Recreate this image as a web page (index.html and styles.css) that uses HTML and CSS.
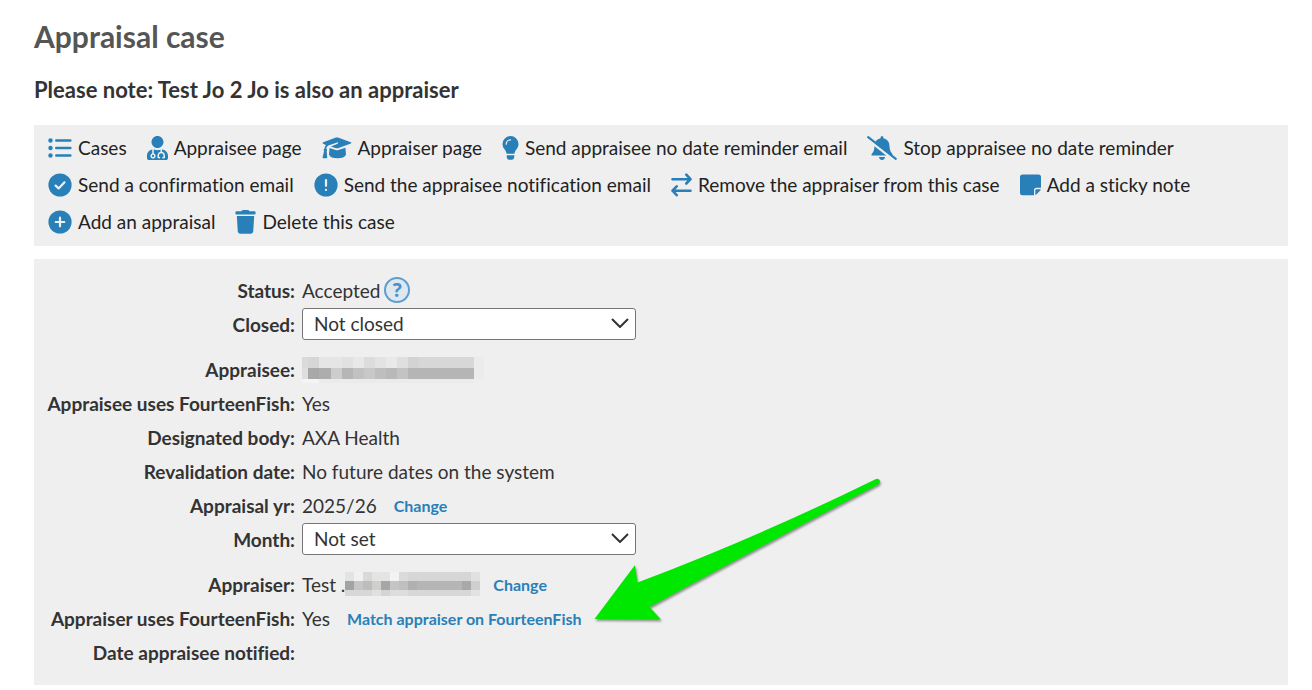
FILE: index.html
```html
<!DOCTYPE html>
<html lang="en">

<head>
    <meta charset="utf-8" />
    <title>Appraisal case</title>
    <meta name="viewport" content="width=device-width, initial-scale=1.0">
    <link rel="stylesheet" href="styles.css">
</head>

<body>
    <main class="main">
        <h1 class="title">Appraisal case</h1>
        <h2 class="note">Please note: Test Jo 2 Jo is also an appraiser</h2>

        <!-- Case actions -->
        <nav class="menu-bar">
            <a class="menu-item" href="#">
                <svg class="icon" width="24" height="24" viewBox="0 0 24 24">
                    <circle cx="2.5" cy="4.5" r="2.2" /><circle cx="2.5" cy="12" r="2.2" /><circle cx="2.5" cy="19.5" r="2.2" />
                    <path class="line" d="M8.3 4.5H22.3M8.3 12H22.3M8.3 19.5H22.3" stroke-width="2.6" />
                </svg>
                Cases
            </a>
            <a class="menu-item" href="#">
                <svg class="icon" width="21" height="24" viewBox="0 0 448 512">
                    <path d="M224 256c70.7 0 128-57.3 128-128S294.7 0 224 0 96 57.3 96 128s57.3 128 128 128zM104 424c0 13.3 10.7 24 24 24s24-10.7 24-24-10.7-24-24-24-24 10.7-24 24zm216-135.4v49c36.5 7.4 64 39.8 64 78.4v41.7c0 7.6-5.4 14.2-12.9 15.7l-32.2 6.4c-4.3.9-8.5-1.9-9.4-6.3l-3.1-15.7c-.9-4.3 1.9-8.6 6.3-9.4l19.3-3.9V416c0-62.8-96-65.1-96 1.9v26.7l19.3 3.9c4.3.9 7.1 5.1 6.3 9.4l-3.1 15.7c-.9 4.3-5.1 7.1-9.4 6.3l-31.2-4.2c-7.9-1.1-13.8-7.8-13.8-15.9V416c0-38.6 27.5-70.9 64-78.4v-45.2c-2.2.7-4.4 1.1-6.6 1.9-18 6.3-37.3 9.8-57.4 9.8s-39.4-3.5-57.4-9.8c-7.4-2.6-14.9-4.2-22.6-5.2v81.6c23.1 6.9 40 28.1 40 53.4 0 30.9-25.1 56-56 56s-56-25.1-56-56c0-25.3 16.9-46.5 40-53.4v-80.4C48.5 301 0 355.8 0 422.4v44.8C0 491.9 20.1 512 44.8 512h358.4c24.7 0 44.8-20.1 44.8-44.8v-44.8c0-72-56.8-130.3-128-133.8z" />
                </svg>
                Appraisee page
            </a>
            <a class="menu-item" href="#">
                <svg class="icon" width="30" height="24" viewBox="0 0 30 24">
                    <path d="M14 1.6q1-.4 2 0L28.8 6.2q1.3.6 0 1.4L16 12.2q-1 .3-2 0L8.9 10.4 15.6 7.8q.8-.4.5-1t-1-.4L6.3 9.4Q4.6 10.5 4.3 12.6q1.3 1 .4 2.5L5.2 21.4q0 .8-.8.8H1.3q-.9-.1-.7-1L2.1 15.1q-1-1.5.4-2.5Q2.7 10.4 3.9 8.9L1.2 7.8q-1.1-.8 0-1.5z" />
                    <path d="M7.6 12 13.5 14.1q1.5.5 3 0L23.4 11.7 24 18.4Q22.5 22.2 15.5 22.3 8.5 22.2 6.9 18.4z" />
                </svg>
                Appraiser page
            </a>
            <a class="menu-item" href="#">
                <svg class="icon" width="17" height="24" viewBox="0 0 17 24">
                    <path d="M8.5 0A8 8 0 0 1 16.5 8.2Q16.5 11 14.5 13.3 12.8 15.3 12.3 17.7H4.7Q4.2 15.3 2.5 13.3 .5 11 .5 8.2A8 8 0 0 1 8.5 0z" />
                    <path d="M4.7 19.2H12.3V20.8Q12 23.7 9.8 23.7H7.2Q5 23.7 4.7 20.8z" />
                    <path class="cut" d="M4.2 8.2A4.3 4.3 0 0 1 8.5 3.9" stroke-width="1.3" />
                </svg>
                Send appraisee no date reminder email
            </a>
            <a class="menu-item" href="#">
                <svg class="icon" width="30" height="24" viewBox="0 0 30 24">
                    <path d="M4.5 19.4Q4.3 18.3 5.2 17.3 7.5 15 7.5 10 7.6 3.5 13.6 2.3V1.5Q13.7 .2 15 .1 16.3 .2 16.4 1.5V2.3Q22.4 3.7 22.5 10 22.6 15 24.9 17.3 25.6 18.3 25.4 19.4z" />
                    <path d="M12 20.9H18Q17.6 23.9 15 23.9T12 20.9z" />
                    <path class="cut" d="M3 4.8 22 19.700" stroke-width="3" />
                    <path class="line" d="M1.2 1.2 28.8 22.8" stroke-width="2.1" />
                </svg>
                Stop appraisee no date reminder
            </a>
            <a class="menu-item" href="#">
                <svg class="icon" width="24" height="24" viewBox="0 0 24 24">
                    <circle cx="12" cy="12" r="11.6" />
                    <path class="mark" d="M7.6 12.6 10.6 15.4 16.5 9.3" />
                </svg>
                Send a confirmation email
            </a>
            <a class="menu-item" href="#">
                <svg class="icon" width="24" height="24" viewBox="0 0 24 24">
                    <circle cx="12" cy="12" r="11.6" />
                    <path class="mark" d="M12 7V12.8M12 16.9V17" />
                </svg>
                Send the appraisee notification email
            </a>
            <a class="menu-item" href="#">
                <svg class="icon" width="21" height="24" viewBox="0 0 21 24">
                    <path class="line" d="M1.5 6.2H19M15.3 1.7 19.5 6.2 15.3 10.5M19.5 17.7H2M5.7 13.3 1.5 17.7 5.7 22.2" stroke-width="2.6" />
                </svg>
                Remove the appraiser from this case
            </a>
            <a class="menu-item" href="#">
                <svg class="icon" width="21" height="24" viewBox="0 0 21 24">
                    <path d="M2.5 1.5H18.5Q21 1.5 21 4V14.8H16.5Q14 14.8 14 17.3V22.3H2.5Q0 22.3 0 19.8V4Q0 1.5 2.5 1.5z" />
                    <path d="M15.3 22V17.5Q15.3 16.2 16.6 16.2H20.8Q20.7 17 20 17.7L16.8 21Q16.2 21.7 15.3 22z" />
                </svg>
                Add a sticky note
            </a>
            <a class="menu-item" href="#">
                <svg class="icon" width="24" height="24" viewBox="0 0 24 24">
                    <circle cx="12" cy="12" r="11.6" />
                    <path class="mark" d="M12 7.7V16.3M7.7 12H16.3" />
                </svg>
                Add an appraisal
            </a>
            <a class="menu-item" href="#">
                <svg class="icon" width="21" height="24" viewBox="0 0 21 24">
                    <path d="M6.6 1 7.3.3Q7.6 0 8 0H13Q13.4 0 13.7.3L14.4 1.3H19.5Q20.6 1.3 20.6 2.4V3.5Q20.6 4.4 19.5 4.4H1.5Q.4 4.4 .4 3.5V2.4Q.4 1.3 1.5 1.3H6.4z" />
                    <path d="M1.8 6H19.2L18.2 21.6Q18 23.7 16 23.7H5Q3 23.7 2.8 21.6z" />
                </svg>
                Delete this case
            </a>
        </nav>

        <!-- Case details -->
        <form class="case">
            <div class="row">
                <span class="label">Status:</span>
                <span class="value">Accepted
                    <button class="help" type="button" aria-label="Help about status">?</button>
                </span>
            </div>
            <div class="row row-select">
                <label class="label" for="closed">Closed:</label>
                <span class="select-box">
                    <select id="closed">
                        <option>Not closed</option>
                        <option>Closed</option>
                    </select>
                    <svg class="chevron" width="18" height="10" viewBox="0 0 18 10"><path d="M1 1 9 9 17 1" /></svg>
                </span>
            </div>
            <div class="row">
                <span class="label">Appraisee:</span>
                <span class="value">
                    <!-- Name hidden by blocks -->
                    <svg class="blocks" width="182" height="28" viewBox="5 0 182 28">
                        <path fill="#dadada" d="M0 2h11v11H0z" /><path fill="#d6d6d6" d="M11 2h11v11H11z" />
                        <path fill="#e5e5e5" d="M22 2h23v11H22z" /><path fill="#e1e1e1" d="M45 2h11v11H45z" />
                        <path fill="#e8e8e8" d="M56 2h11v11H56z" /><path fill="#dcdcdc" d="M67 2h11v11H67z" />
                        <path fill="#e3e3e3" d="M78 2h11v11H78z" /><path fill="#e9e9e9" d="M89 2h11v11H89z" />
                        <path fill="#dfdfdf" d="M100 2h11v11H100z" /><path fill="#d3d3d3" d="M111 2h11v11H111z" />
                        <path fill="#d7d7d7" d="M122 2h55v11H122z" /><path fill="#ebebeb" d="M177 2h11v22H177z" />
                        <path fill="#dedede" d="M0 13h11v11H0z" /><path fill="#a8a8a8" d="M11 13h11v11H11z" />
                        <path fill="#adadad" d="M22 13h12v11H22z" /><path fill="#cdcdcd" d="M34 13h11v11H34z" />
                        <path fill="#b6b6b6" d="M45 13h11v11H45z" /><path fill="#c1c1c1" d="M56 13h11v11H56z" />
                        <path fill="#c8c8c8" d="M67 13h11v11H67z" /><path fill="#bebebe" d="M78 13h11v11H78z" />
                        <path fill="#b9b9b9" d="M89 13h11v11H89z" /><path fill="#c3c3c3" d="M100 13h11v11H100z" />
                        <path fill="#b5b5b5" d="M111 13h66v11H111z" />
                        <path fill="#f4f4f4" d="M0 24h22v5H0z" /><path fill="#ebebeb" d="M22 24h155v5H22z" />
                    </svg>
                </span>
            </div>
            <div class="row">
                <span class="label">Appraisee uses FourteenFish:</span>
                <span class="value">Yes</span>
            </div>
            <div class="row">
                <span class="label">Designated body:</span>
                <span class="value">AXA Health</span>
            </div>
            <div class="row">
                <span class="label">Revalidation date:</span>
                <span class="value">No future dates on the system</span>
            </div>
            <div class="row">
                <span class="label">Appraisal yr:</span>
                <span class="value">2025/26 <a class="change" href="#">Change</a></span>
            </div>
            <div class="row row-select">
                <label class="label" for="month">Month:</label>
                <span class="select-box">
                    <select id="month">
                        <option>Not set</option>
                        <option>January</option>
                    </select>
                    <svg class="chevron" width="18" height="10" viewBox="0 0 18 10"><path d="M1 1 9 9 17 1" /></svg>
                </span>
            </div>
            <div class="row">
                <span class="label">Appraiser:</span>
                <span class="value">Test .
                    <svg class="blocks" width="135" height="28" viewBox="0 0 135 28">
                        <path fill="#e3e3e3" d="M0 2h9v9H0z" /><path fill="#f1f1f1" d="M9 2h9v9H9z" />
                        <path fill="#d9d9d9" d="M18 2h9v9h-9z" /><path fill="#e4e4e4" d="M27 2h18v9H27z" />
                        <path fill="#f3f3f3" d="M45 2h9v9h-9z" /><path fill="#dbdbdb" d="M54 2h9v9h-9z" />
                        <path fill="#d6d6d6" d="M63 2h63v9H63z" /><path fill="#e1e1e1" d="M126 2h9v9h-9z" />
                        <path fill="#a3a3a3" d="M0 11h9v9H0z" /><path fill="#c6c6c6" d="M9 11h9v9H9z" />
                        <path fill="#bdbdbd" d="M18 11h9v9h-9z" /><path fill="#d0cfcb" d="M27 11h9v9h-9z" />
                        <path fill="#a6a6a6" d="M36 11h9v9h-9z" /><path fill="#c5c5c5" d="M45 11h9v9h-9z" />
                        <path fill="#bfbfbf" d="M54 11h9v9h-9z" /><path fill="#b0b0b0" d="M63 11h9v9h-9z" />
                        <path fill="#b5b5b5" d="M72 11h45v9H72z" /><path fill="#a8a8a8" d="M117 11h9v9h-9z" />
                        <path fill="#cfcfcf" d="M126 11h9v9h-9z" />
                        <path fill="#d6d8d8" d="M0 20h27v6H0z" /><path fill="#dfe0e0" d="M27 20h9v6h-9z" />
                        <path fill="#d3d5d5" d="M36 20h9v6h-9z" /><path fill="#dcdddd" d="M45 20h18v6H45z" />
                        <path fill="#d6d8d8" d="M63 20h63v6H63z" /><path fill="#e1e2e2" d="M126 20h9v6h-9z" />
                    </svg>
                    <a class="change" href="#">Change</a>
                </span>
            </div>
            <div class="row">
                <span class="label">Appraiser uses FourteenFish:</span>
                <span class="value">Yes <a class="change" href="#">Match appraiser on FourteenFish</a></span>
            </div>
            <div class="row">
                <span class="label">Date appraisee notified:</span>
                <span class="value"></span>
            </div>

            <!-- Arrow pointing at the match link -->
            <svg class="arrow" width="290" height="150" viewBox="0 0 290 150">
                <path d="M.5 143 41 89 43.5 106.5Q164 61 282 3Q285 2 286 5Q286 7 284 8.5Q160 74 55.5 131L67 143.5z" />
            </svg>
        </form>
    </main>
</body>

</html>
```
FILE: styles.css
```css
* {
    box-sizing: border-box;
    font-family: Lato, "Liberation Sans", sans-serif;
}

body {
    margin: 0;
    background-color: #fff;
    color: #333;
    font-size: 19px;
    font-variant-ligatures: none;
}

.main {
    padding: 18px 24px 5px 34px;
}

.title {
    margin: 0 0 20px;
    color: #555;
    font-size: 30px;
    line-height: 36px;
}

.note {
    margin: 0 0 19px;
    font-size: 22px;
    line-height: 32px;
}

.menu-bar {
    display: flex;
    flex-wrap: wrap;
    column-gap: 20px;
    margin-bottom: 13px;
    padding: 4px 14px 6px;
    background-color: #efefef;
}

.menu-item {
    display: flex;
    align-items: center;
    gap: 6px;
    height: 37px;
    color: #222;
    text-decoration: none;
}

.icon {
    fill: #2980b9;
}

.line {
    fill: none;
    stroke: #2980b9;
    stroke-linecap: round;
    stroke-linejoin: round;
}

.cut {
    fill: none;
    stroke: #efefef;
    stroke-linecap: round;
}

.mark {
    fill: none;
    stroke: #efefef;
    stroke-width: 2.2;
    stroke-linecap: round;
    stroke-linejoin: round;
}

.case {
    position: relative;
    padding: 15px 0;
    background-color: #efefef;
}

.row {
    display: grid;
    grid-template-columns: 261px 1fr;
    column-gap: 7px;
    align-items: center;
    height: 34px;
}

.row-select {
    margin-bottom: 11px;
}

.label,
.value {
    padding-bottom: 2px;
}

.label {
    font-weight: bold;
    text-align: right;
}

.value {
    display: flex;
    align-items: center;
}

.help {
    width: 26px;
    height: 26px;
    margin-left: 4px;
    padding: 0;
    border: 2px solid #5a9fd0;
    border-radius: 50%;
    background-color: #dfe7ef;
    color: #4a90c8;
    font-family: "Open Sans", sans-serif;
    font-size: 19px;
    font-weight: bold;
    line-height: 20px;
}

.select-box {
    position: relative;
    align-self: start;
    width: 334px;
}

select {
    appearance: none;
    display: block;
    width: 100%;
    height: 32px;
    padding: 0 40px 2px 11px;
    border: 1px solid #767676;
    border-radius: 3px;
    background-color: #fff;
    color: #333;
    font-size: 19px;
}

.chevron {
    position: absolute;
    top: 10px;
    right: 7px;
    fill: none;
    stroke: #333;
    stroke-width: 2;
    pointer-events: none;
}

.change {
    margin-left: 17px;
    color: #2980b9;
    font-size: 16px;
    font-weight: bold;
    text-decoration: none;
}

.blocks + .change {
    margin-left: 13px;
}

.arrow {
    position: absolute;
    left: 560px;
    top: 217px;
    fill: #00e800;
    filter: drop-shadow(1px 2px 1px rgba(0, 0, 0, 0.4));
    pointer-events: none;
}
```
